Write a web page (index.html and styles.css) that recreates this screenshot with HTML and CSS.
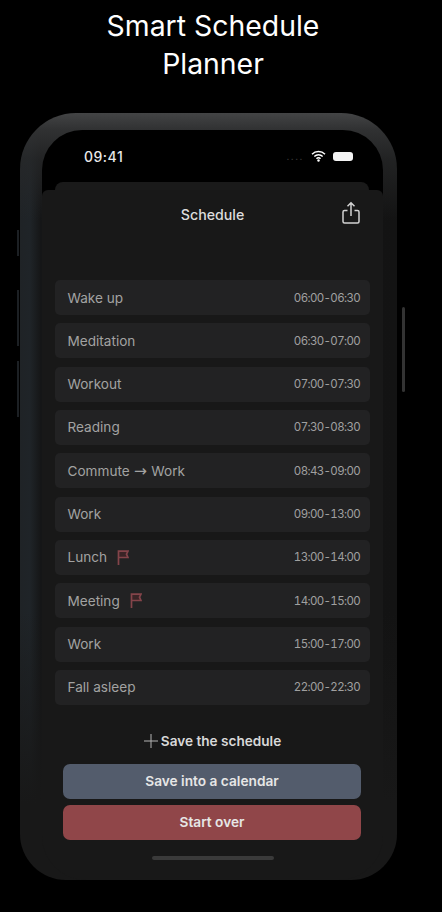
FILE: index.html
```html
<!DOCTYPE html>
<html>
<head>
<meta charset="UTF-8">
<title>Smart Schedule Planner</title>
<link rel="stylesheet" href="styles.css">
</head>
<body>
	<h1 class="headline">Smart Schedule<br>Planner</h1>

	<div class="phone">
		<span class="side-btn side-mute"></span>
		<span class="side-btn side-up"></span>
		<span class="side-btn side-down"></span>
		<span class="side-btn side-power"></span>

		<div class="screen">
			<div class="status">
				<span class="clock">09:41</span>
				<div class="status-icons">
					<span class="signal">....</span>
					<svg class="wifi" width="15" height="12" viewBox="0 0 15 12">
						<path d="M1 4.200a9.200 9.200 0 0 1 13 0M3.300 6.500a6 6 0 0 1 8.400 0M5.500 8.700a2.800 2.800 0 0 1 4 0" fill="none" stroke="#fff" stroke-width="1.500"/>
						<circle cx="7.500" cy="10.500" r="1.200" fill="#fff"/>
					</svg>
					<span class="battery"></span>
				</div>
			</div>

			<div class="sheet-tab"></div>
			<div class="sheet">
				<div class="nav">
					<span class="nav-title">Schedule</span>
					<svg class="share" width="20" height="24" viewBox="0 0 20 24">
						<path d="M6.500 9.500H3.500a1.500 1.500 0 0 0-1.500 1.500v9.500a1.500 1.500 0 0 0 1.500 1.500h13a1.500 1.500 0 0 0 1.500-1.500V11a1.500 1.500 0 0 0-1.500-1.500h-3M10 15V2M6.500 5.200 10 1.800l3.500 3.400" fill="none" stroke="#d2d2d2" stroke-width="1.500"/>
					</svg>
				</div>

				<ul class="rows">
					<li class="row"><span class="row-name">Wake up</span><span class="row-time">06:00-06:30</span></li>
					<li class="row"><span class="row-name">Meditation</span><span class="row-time">06:30-07:00</span></li>
					<li class="row"><span class="row-name">Workout</span><span class="row-time">07:00-07:30</span></li>
					<li class="row"><span class="row-name">Reading</span><span class="row-time">07:30-08:30</span></li>
					<li class="row"><span class="row-name"><span>Commute <span class="arrow">→</span> Work</span></span><span class="row-time">08:43-09:00</span></li>
					<li class="row"><span class="row-name">Work</span><span class="row-time">09:00-13:00</span></li>
					<li class="row">
						<span class="row-name">Lunch
							<svg class="flag" width="12" height="15" viewBox="0 0 12 15"><path d="M1.500 15V1.200h9.500l-1.500 3 1.500 3.300H1.500" fill="#3a2426" stroke="#84444a" stroke-width="1.700"/></svg>
						</span>
						<span class="row-time">13:00-14:00</span>
					</li>
					<li class="row">
						<span class="row-name">Meeting
							<svg class="flag" width="12" height="15" viewBox="0 0 12 15"><path d="M1.500 15V1.200h9.500l-1.500 3 1.500 3.300H1.500" fill="#3a2426" stroke="#84444a" stroke-width="1.700"/></svg>
						</span>
						<span class="row-time">14:00-15:00</span>
					</li>
					<li class="row"><span class="row-name">Work</span><span class="row-time">15:00-17:00</span></li>
					<li class="row"><span class="row-name">Fall asleep</span><span class="row-time">22:00-22:30</span></li>
				</ul>

				<div class="save-link">
					<svg class="plus" width="14" height="14" viewBox="0 0 14 14"><path d="M7 0v14M0 7h14" stroke="#b4b4b4" stroke-width="1"/></svg>
					<span>Save the schedule</span>
				</div>
				<button type="button" class="btn btn-blue">Save into a calendar</button>
				<button type="button" class="btn btn-red">Start over</button>
				<div class="home-bar"></div>
			</div>
		</div>
	</div>
</body>
</html>
```

FILE: styles.css
```css
html, body {
	height: 100%;
}

body {
	margin: 0;
	padding: 7px 0 0 0;
	box-sizing: border-box;
	background-color: #000;
	font-family: Inter, "Liberation Sans", sans-serif;
	overflow: hidden;
}

.headline {
	margin: 0 0 30px 0;
	padding-right: 16px;
	color: #fff;
	font-size: 28.400px;
	font-weight: 400;
	line-height: 38px;
	text-align: center;
}

.phone {
	position: relative;
	width: 377px;
	height: 767px;
	margin-left: 20px;
	padding: 17px 14px 0 22px;
	box-sizing: border-box;
	border-radius: 56px 56px 46px 46px;
	background:
		linear-gradient(180deg, transparent 65%, #181818 90%),
		linear-gradient(180deg, #434445 0, #303132 2.200%, rgba(40, 41, 42, 0.7) 6%, transparent 14%),
		linear-gradient(90deg, #1f2326 0, #1f2428 2.600%, #151617 5.500%, #131313 100%);
}

.side-btn {
	position: absolute;
	width: 2px;
	background-color: #1c2024;
}

.side-mute {
	left: -3px;
	top: 117px;
	height: 26px;
}

.side-up {
	left: -3px;
	top: 177px;
	height: 56px;
}

.side-down {
	left: -3px;
	top: 248px;
	height: 56px;
}

.side-power {
	right: -8px;
	top: 194px;
	height: 85px;
	width: 3px;
	border-radius: 2px;
	background-color: #333;
}

.screen {
	height: 750px;
	border-radius: 40px 40px 44px 44px;
	background: linear-gradient(180deg, #000 70px, #181818 70px);
	overflow: hidden;
}

.status {
	display: flex;
	justify-content: space-between;
	align-items: center;
	height: 52px;
	padding: 0 30px 0 42px;
	box-sizing: border-box;
}

.clock {
	color: #e8e8e8;
	font-size: 14px;
	font-weight: 500;
	letter-spacing: 0.500px;
}

.status-icons {
	display: flex;
	align-items: center;
	gap: 7px;
}

.signal {
	color: #444;
	font-size: 10px;
	letter-spacing: 1.500px;
}

.battery {
	width: 20px;
	height: 9px;
	border-radius: 3px;
	background-color: #f4f4f4;
}

.sheet-tab {
	height: 8px;
	margin: 0 14px 0 13px;
	border-radius: 8px 8px 0 0;
	background-color: #1a1a1a;
}

.sheet {
	display: flex;
	flex-direction: column;
	height: 690px;
	border-radius: 6px 6px 0 0;
	background-color: #181818;
}

.nav {
	position: relative;
	display: flex;
	justify-content: center;
	height: 90px;
	padding-top: 15px;
	box-sizing: border-box;
}

.nav-title {
	color: #dcdcdc;
	font-size: 14.200px;
	font-weight: 500;
	line-height: 20px;
}

.share {
	position: absolute;
	right: 22px;
	top: 11px;
}

.rows {
	display: flex;
	flex-direction: column;
	gap: 8.330px;
	margin: 0 13px;
	padding: 0;
	list-style-type: none;
}

.row {
	display: flex;
	justify-content: space-between;
	align-items: center;
	height: 35px;
	padding: 0 10px 0 12.500px;
	border-radius: 5px;
	background-color: #222223;
}

.row-name {
	display: flex;
	align-items: center;
	gap: 10px;
	color: #a2a2a2;
	font-size: 13.600px;
}

.arrow {
	font-family: "DejaVu Sans", sans-serif;
	font-size: 15.500px;
	line-height: 1;
	margin: 0 0.500px;
}

.row-time {
	flex-shrink: 0;
	color: #a0a0a0;
	font-size: 11.500px;
	font-variant-numeric: tabular-nums;
	letter-spacing: -0.650px;
	white-space: nowrap;
}

.save-link {
	display: flex;
	justify-content: center;
	align-items: center;
	gap: 3px;
	margin-top: 27px;
	color: #d8d8d8;
	font-size: 13.600px;
	font-weight: 600;
	line-height: 18px;
}

.btn {
	display: block;
	width: 298px;
	height: 35px;
	margin: 0 0 6px 21px;
	border: none;
	border-radius: 7px;
	color: #e6e6e6;
	font-family: inherit;
	font-size: 13.700px;
	font-weight: 600;
}

.btn-blue {
	margin-top: 14px;
	background-color: #535c6c;
}

.btn-red {
	background-color: #904649;
}

.home-bar {
	width: 122px;
	height: 4px;
	margin: 10px auto 0 auto;
	border-radius: 2px;
	background-color: #3a3a3a;
}
```
